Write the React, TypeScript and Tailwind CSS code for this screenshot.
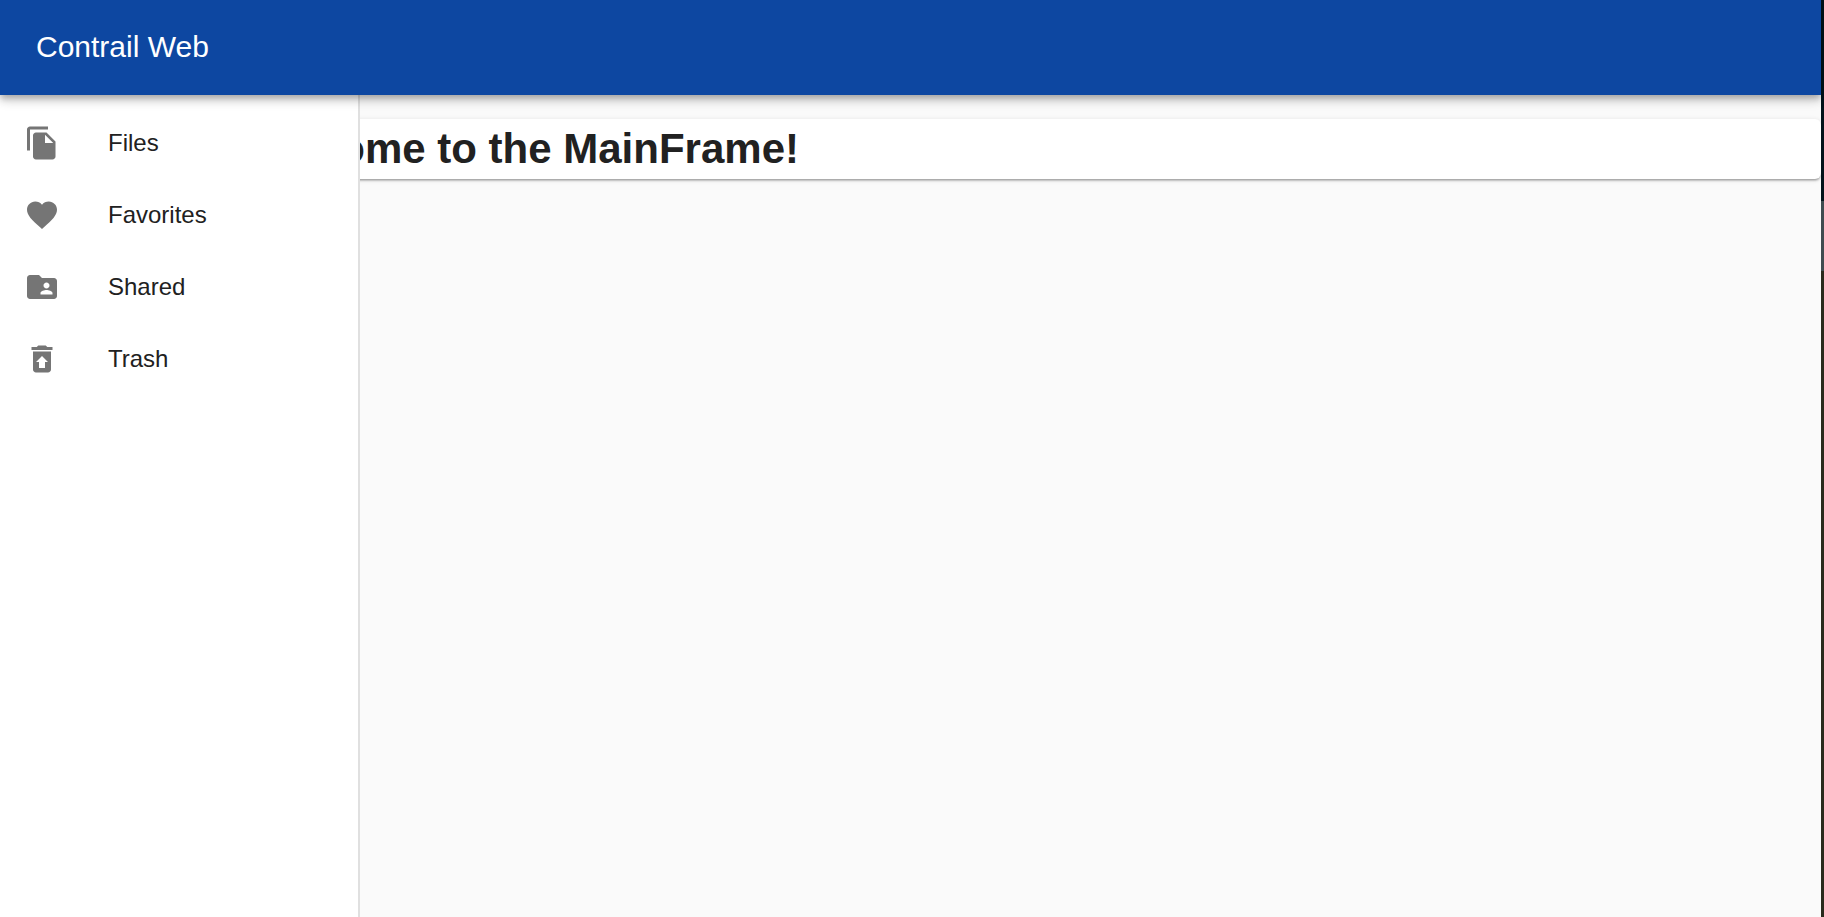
import type { ReactNode } from "react";

type NavItem = { label: string; icon: ReactNode };

const navItems: NavItem[] = [
  {
    label: "Files",
    icon: (
      <path d="M16 1H4c-1.100 0-2 .9-2 2v14h2V3h12V1zm-1 4l6 6v10c0 1.100-.9 2-2 2H7.990C6.890 23 6 22.100 6 21l.01-14c0-1.100.89-2 1.990-2h7zm-1 7h5.500L14 6.500V12z" />
    ),
  },
  {
    label: "Favorites",
    icon: (
      <path d="M12 21.350l-1.450-1.320C5.400 15.360 2 12.280 2 8.500 2 5.420 4.420 3 7.500 3c1.740 0 3.410.81 4.500 2.090C13.090 3.810 14.760 3 16.500 3 19.580 3 22 5.420 22 8.500c0 3.780-3.400 6.860-8.550 11.540L12 21.350z" />
    ),
  },
  {
    label: "Shared",
    icon: (
      <path d="M20 6h-8l-2-2H4c-1.100 0-1.990.9-1.990 2L2 18c0 1.100.9 2 2 2h16c1.100 0 2-.9 2-2V8c0-1.100-.9-2-2-2zm-5 3c1.100 0 2 .9 2 2s-.9 2-2 2-2-.9-2-2 .9-2 2-2zm4 8h-8v-1c0-1.330 2.670-2 4-2s4 .67 4 2v1z" />
    ),
  },
  {
    label: "Trash",
    icon: (
      <path d="M19 4h-3.500l-1-1h-5l-1 1H5v2h14zM6 7v12c0 1.100.9 2 2 2h8c1.100 0 2-.9 2-2V7H6zm8 7v4h-4v-4H8l4-4 4 4h-2z" />
    ),
  },
];

function Header() {
  return (
    <header className="z-20 flex h-[95px] items-center bg-[#0d47a1] px-9 pb-0.5 text-white shadow-[0_3px_6px_-1px_rgba(0,0,0,0.2),0_6px_8px_0_rgba(0,0,0,0.14),0_2px_15px_0_rgba(0,0,0,0.12)]">
      <p className="text-[30px] leading-12">Contrail Web</p>
    </header>
  );
}

function Sidebar() {
  return (
    <nav className="z-10 col-start-1 row-start-1 w-[360px] border-r-2 border-[#e0e0e0] bg-white py-3">
      <ul>
        {navItems.map(({ label, icon }) => (
          <li key={label}>
            <button
              type="button"
              className="flex h-18 w-full items-center gap-12 px-6 text-left text-2xl"
            >
              <svg viewBox="0 0 24 24" aria-hidden="true" className="size-9 fill-[#757575]">
                {icon}
              </svg>
              {label}
            </button>
          </li>
        ))}
      </ul>
    </nav>
  );
}

export default function App() {
  return (
    <div className="flex min-h-screen bg-[#fafafa] font-['Liberation_Sans',Arial,sans-serif] text-[#212121]">
      <div className="flex min-w-0 flex-1 flex-col">
        <Header />
        <div className="grid flex-1 grid-cols-1">
          <Sidebar />
          <main className="col-start-1 row-start-1 pt-6">
            <section className="rounded-md bg-white pl-[242px] shadow-[0_3px_2px_-2px_rgba(0,0,0,0.2),0_2px_2px_0_rgba(0,0,0,0.14),0_1px_5px_0_rgba(0,0,0,0.12)]">
              <h1 className="text-[42px] leading-[60px] font-bold">Welcome to the MainFrame!</h1>
            </section>
          </main>
        </div>
      </div>
      <div aria-hidden="true" className="flex w-[3px] flex-col">
        <div className="h-[201px] bg-[#03131b]" />
        <div className="h-[70px] bg-[#3f4c50]" />
        <div className="flex-1 bg-[#2a2a1c]" />
      </div>
    </div>
  );
}
